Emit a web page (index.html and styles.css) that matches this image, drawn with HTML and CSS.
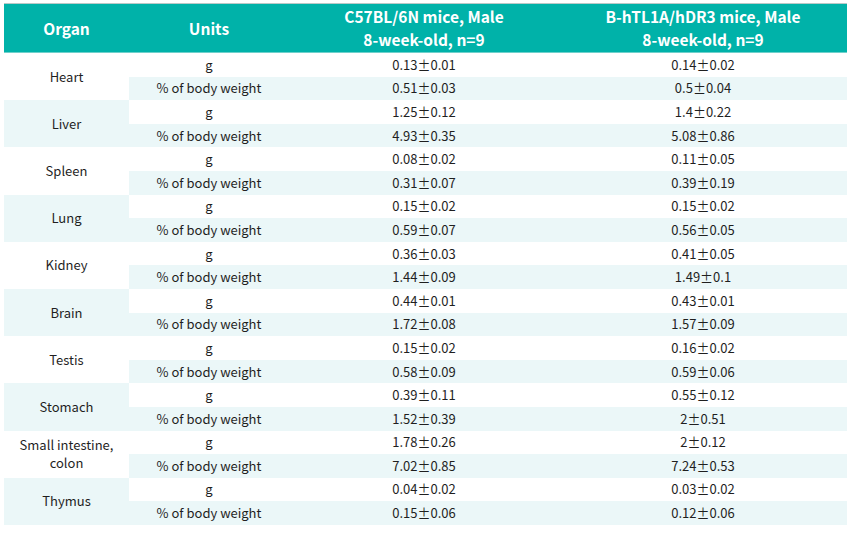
FILE: index.html
```html
<!DOCTYPE html>
<html>
<head>
<meta charset="utf-8">
<link rel="stylesheet" href="styles.css">
</head>
<body>
<table class="data">
  <colgroup>
    <col class="c-organ"><col class="c-units"><col class="c-a"><col class="c-b">
  </colgroup>
  <thead>
    <tr>
      <th>Organ</th>
      <th>Units</th>
      <th>C57BL/6N mice, Male<br>8-week-old, n=9</th>
      <th>B-hTL1A/hDR3 mice, Male<br>8-week-old, n=9</th>
    </tr>
  </thead>
  <tbody>
    <tr class="g"><td class="organ" rowspan="2">Heart</td><td>g</td><td>0.13±0.01</td><td>0.14±0.02</td></tr>
    <tr class="pct"><td>% of body weight</td><td>0.51±0.03</td><td>0.5±0.04</td></tr>
    <tr class="g"><td class="organ alt" rowspan="2">Liver</td><td>g</td><td>1.25±0.12</td><td>1.4±0.22</td></tr>
    <tr class="pct"><td>% of body weight</td><td>4.93±0.35</td><td>5.08±0.86</td></tr>
    <tr class="g"><td class="organ" rowspan="2">Spleen</td><td>g</td><td>0.08±0.02</td><td>0.11±0.05</td></tr>
    <tr class="pct"><td>% of body weight</td><td>0.31±0.07</td><td>0.39±0.19</td></tr>
    <tr class="g"><td class="organ alt" rowspan="2">Lung</td><td>g</td><td>0.15±0.02</td><td>0.15±0.02</td></tr>
    <tr class="pct"><td>% of body weight</td><td>0.59±0.07</td><td>0.56±0.05</td></tr>
    <tr class="g"><td class="organ" rowspan="2">Kidney</td><td>g</td><td>0.36±0.03</td><td>0.41±0.05</td></tr>
    <tr class="pct"><td>% of body weight</td><td>1.44±0.09</td><td>1.49±0.1</td></tr>
    <tr class="g"><td class="organ alt" rowspan="2">Brain</td><td>g</td><td>0.44±0.01</td><td>0.43±0.01</td></tr>
    <tr class="pct"><td>% of body weight</td><td>1.72±0.08</td><td>1.57±0.09</td></tr>
    <tr class="g"><td class="organ" rowspan="2">Testis</td><td>g</td><td>0.15±0.02</td><td>0.16±0.02</td></tr>
    <tr class="pct"><td>% of body weight</td><td>0.58±0.09</td><td>0.59±0.06</td></tr>
    <tr class="g"><td class="organ alt" rowspan="2">Stomach</td><td>g</td><td>0.39±0.11</td><td>0.55±0.12</td></tr>
    <tr class="pct"><td>% of body weight</td><td>1.52±0.39</td><td>2±0.51</td></tr>
    <tr class="g"><td class="organ" rowspan="2">Small intestine,<br>colon</td><td>g</td><td>1.78±0.26</td><td>2±0.12</td></tr>
    <tr class="pct"><td>% of body weight</td><td>7.02±0.85</td><td>7.24±0.53</td></tr>
    <tr class="g"><td class="organ alt" rowspan="2">Thymus</td><td>g</td><td>0.04±0.02</td><td>0.03±0.02</td></tr>
    <tr class="pct"><td>% of body weight</td><td>0.15±0.06</td><td>0.12±0.06</td></tr>
  </tbody>
</table>
</body>
</html>
```

FILE: styles.css
```css
html, body {
  margin: 0;
  padding: 0;
  background: #ffffff;
}
body {
  padding: 3px 4px 0 4px;
  font-family: "Noto Sans CJK SC", "Noto Sans", sans-serif;
  color: #1f1f1f;
}
.data {
  border-collapse: collapse;
  table-layout: fixed;
  width: 843px;
}
.c-organ { width: 125px; }
.c-units { width: 160px; }
.c-a { width: 270px; }
.c-b { width: 288px; }
.data thead tr {
  height: 49px;
}
.data th {
  background: #00b2a9;
  color: #ffffff;
  font-weight: 700;
  font-size: 15.5px;
  line-height: 23px;
  text-align: center;
  padding: 0;
  border-top: 1px solid #b9c9c8;
  border-bottom: 1px solid #6fd0cb;
}
.data td {
  font-size: 13px;
  line-height: 16px;
  text-align: center;
  padding: 0;
  height: 23.6px;
}
.data tr.pct td {
  background: #ebf7f8;
}
.data td.organ {
  background: #ffffff;
  line-height: 18px;
}
.data td.organ.alt {
  background: #ebf7f8;
}
```
